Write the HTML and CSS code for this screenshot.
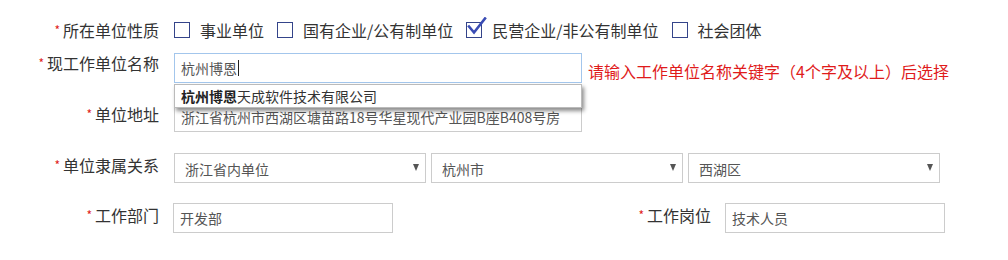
FILE: index.html
```html
<!DOCTYPE html>
<html lang="zh-CN">
<head>
<meta charset="utf-8">
<title>单位信息</title>
<link rel="stylesheet" href="styles.css">
</head>
<body>
<form class="form">
  <div class="row row-type">
    <label class="lbl"><span class="req">*</span>所在单位性质</label>
    <div class="checks">
      <span class="chk"><span class="box"></span><span class="chk-text">事业单位</span></span>
      <span class="chk"><span class="box"></span><span class="chk-text">国有企业/公有制单位</span></span>
      <span class="chk"><span class="box checked"><svg class="tick" width="22" height="22" viewBox="0 0 22 22"><polyline points="3,9.5 8,15.5 19,1.5" fill="none" stroke="#3a4cb4" stroke-width="2.6" stroke-linecap="square"/></svg></span><span class="chk-text">民营企业/非公有制单位</span></span>
      <span class="chk"><span class="box"></span><span class="chk-text">社会团体</span></span>
    </div>
  </div>

  <div class="row row-name">
    <label class="lbl lbl-flush"><span class="req">*</span>现工作单位名称</label>
    <div class="field-wrap">
      <div class="input input-focus input-wide"><span class="val">杭州博恩</span><span class="caret"></span></div>
      <div class="suggest"><b>杭州博恩</b>天成软件技术有限公司</div>
    </div>
    <span class="hint">请输入工作单位名称关键字（4个字及以上）后选择</span>
  </div>

  <div class="row row-addr">
    <label class="lbl"><span class="req">*</span>单位地址</label>
    <div class="input input-wide"><span class="val">浙江省杭州市西湖区塘苗路18号华星现代产业园B座B408号房</span></div>
  </div>

  <div class="row row-rel">
    <label class="lbl"><span class="req">*</span>单位隶属关系</label>
    <div class="selects">
      <div class="select"><span>浙江省内单位</span><span class="arrow"></span></div>
      <div class="select"><span>杭州市</span><span class="arrow"></span></div>
      <div class="select"><span>西湖区</span><span class="arrow"></span></div>
    </div>
  </div>

  <div class="row row-dept">
    <label class="lbl"><span class="req">*</span>工作部门</label>
    <div class="input input-short input-dept"><span class="val">开发部</span></div>
    <label class="lbl lbl-post"><span class="req">*</span>工作岗位</label>
    <div class="input input-short"><span class="val">技术人员</span></div>
  </div>
</form>
</body>
</html>
```

FILE: styles.css
```css
* { box-sizing: border-box; }

html, body {
  margin: 0;
  padding: 0;
  background: #fff;
}

body {
  width: 1008px;
  height: 260px;
  overflow: hidden;
  font-family: "Noto Sans CJK SC", "Noto Sans", sans-serif;
  color: #333;
}

.form {
  display: flex;
  flex-direction: column;
  padding-top: 20px;
}

.row {
  display: flex;
  align-items: flex-start;
}

.row-type { height: 20px; align-items: center; }
.row-name { margin-top: 13px; height: 30px; }
.row-addr { margin-top: 19px; height: 30px; }
.row-rel  { margin-top: 21px; height: 30px; }
.row-dept { margin-top: 20px; height: 30px; }

.lbl {
  width: 159px;
  flex: none;
  text-align: right;
  font-size: 16px;
  line-height: 20px;
  padding-top: 2px;
  margin-right: 15px;
  color: #333;
  white-space: nowrap;
}

.row-type .lbl { padding-top: 0; }
.lbl-flush { padding-top: 0; }

.req {
  color: #e02020;
  font-size: 12px;
  vertical-align: top;
  line-height: 20px;
  margin-right: 3px;
}

/* checkboxes */
.checks {
  display: flex;
  align-items: center;
}

.chk {
  display: flex;
  align-items: center;
  margin-right: 13px;
}

.box {
  position: relative;
  width: 16px;
  height: 16px;
  border: 1px solid #34448a;
  margin-right: 10px;
  flex: none;
  background: #fff;
}

.tick {
  position: absolute;
  left: -1px;
  top: -6px;
}

.chk-text {
  font-size: 16px;
  line-height: 20px;
  color: #333;
}

/* inputs */
.field-wrap {
  position: relative;
}

.input {
  height: 30px;
  border: 1px solid #ccc;
  background: #fff;
  padding: 0 6px;
  display: flex;
  align-items: center;
  font-size: 14px;
  color: #555;
  white-space: nowrap;
  overflow: hidden;
}

.input-wide { width: 408px; }
.input-focus { border-color: #a3c6ec; }

.caret {
  display: inline-block;
  width: 1px;
  height: 16px;
  background: #222;
  margin-left: 1px;
}

.val { line-height: 20px; }

.suggest {
  position: absolute;
  left: 0;
  top: 31px;
  width: 408px;
  height: 24px;
  background: #fff;
  border: 1px solid #bbb;
  box-shadow: 2px 3px 4px rgba(0, 0, 0, 0.45);
  padding: 0 6px;
  font-size: 14px;
  line-height: 22px;
  color: #333;
  z-index: 2;
}

.suggest b { font-weight: 700; color: #222; }

.hint {
  margin-left: 6px;
  font-size: 16px;
  line-height: 20px;
  padding-top: 8px;
  color: #e01b1b;
  white-space: nowrap;
}

/* selects */
.selects {
  display: flex;
  gap: 5px;
}

.select {
  width: 252px;
  height: 30px;
  border: 1px solid #ccc;
  background: #fff;
  display: flex;
  align-items: center;
  justify-content: space-between;
  padding: 2px 6px 0 10px;
  font-size: 14px;
  color: #555;
}

.arrow {
  width: 0;
  height: 0;
  border-left: 3.5px solid transparent;
  border-right: 3.5px solid transparent;
  border-top: 7px solid #555;
  margin-bottom: 4px;
}

/* dept row */
.input-short { width: 220px; }
.input-dept { margin-left: -1px; }

.lbl-post {
  width: 160px;
  margin-left: 158px;
  margin-right: 14px;
}
```
